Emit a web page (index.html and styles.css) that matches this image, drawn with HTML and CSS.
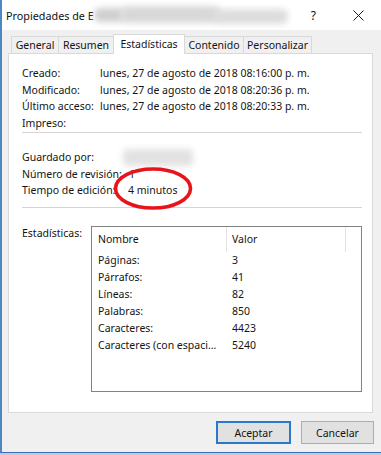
FILE: index.html
```html
<!DOCTYPE html>
<html lang="es">
<head>
<meta charset="utf-8">
<title>Propiedades</title>
<link rel="stylesheet" href="styles.css">
</head>
<body>
<div class="window">
  <div class="titlebar">
    <span class="title">Propiedades de E</span>
    <span class="title-blur"><i class="b1"></i><i class="b2"></i><i class="b3"></i></span>
    <span class="help">?</span>
    <svg class="close" width="11" height="11" viewBox="0 0 11 11"><path d="M0.5 0.5 L10.5 10.5 M10.5 0.5 L0.5 10.5" stroke="#1a1a1a" stroke-width="1" fill="none"/></svg>
  </div>
  <div class="tabs">
    <div class="tab t-general">General</div>
    <div class="tab t-resumen">Resumen</div>
    <div class="tab t-est active">Estadísticas</div>
    <div class="tab t-cont">Contenido</div>
    <div class="tab t-pers">Personalizar</div>
  </div>
  <div class="panel">
    <div class="fields g1">
      <span>Creado:</span><span>lunes, 27 de agosto de 2018 08:16:00 p. m.</span>
      <span>Modificado:</span><span>lunes, 27 de agosto de 2018 08:20:36 p. m.</span>
      <span>Último acceso:</span><span>lunes, 27 de agosto de 2018 08:20:33 p. m.</span>
      <span>Impreso:</span><span></span>
    </div>
    <div class="sep"></div>
    <div class="fields g2">
      <span>Guardado por:</span><span><i class="name-blur"></i></span>
      <span>Número de revisión:</span><span class="rev">1</span>
      <span>Tiempo de edición:</span><span>4 minutos</span>
    </div>
    <div class="sep sep2"></div>
    <div class="stats">
      <span class="stats-label">Estadísticas:</span>
      <div class="listbox">
        <div class="lb-head">
          <span class="h-name">Nombre</span>
          <span class="h-val">Valor</span>
          <span class="h-rest"></span>
        </div>
        <div class="lb-rows">
          <span>Páginas:</span><span>3</span>
          <span>Párrafos:</span><span>41</span>
          <span>Líneas:</span><span>82</span>
          <span>Palabras:</span><span>850</span>
          <span>Caracteres:</span><span>4423</span>
          <span>Caracteres (con espaci...</span><span>5240</span>
        </div>
      </div>
    </div>
  </div>
  <div class="buttons">
    <button class="btn default">Aceptar</button>
    <button class="btn">Cancelar</button>
  </div>
  <svg class="circle" width="86" height="50" viewBox="0 0 86 50"><ellipse cx="43" cy="24.5" rx="37.5" ry="19.5" fill="none" stroke="#e8141c" stroke-width="3.6"/></svg>
</div>
</body>
</html>
```

FILE: styles.css
```css
html, body {
  margin: 0;
  padding: 0;
}
body {
  width: 381px;
  height: 455px;
  overflow: hidden;
  background: #b9cde3;
  font-family: "Noto Sans", "Open Sans", sans-serif;
  font-size: 10.5px;
  color: #141414;
}
.window {
  position: relative;
  box-sizing: border-box;
  width: 381px;
  height: 453px;
  background: #f0f0f0;
  border-left: 2px solid #4f86c6;
  border-bottom: 1px solid #3c6eae;
  display: flex;
  flex-direction: column;
}
.titlebar {
  height: 30px;
  background: #ffffff;
  display: flex;
  align-items: center;
  padding-left: 4px;
  font-size: 10.8px;
  color: #111;
  flex: none;
}
.title {
  white-space: nowrap;
}
.title-blur {
  position: relative;
  width: 196px;
  height: 24px;
  display: block;
  margin-left: 0;
}
.title-blur i {
  position: absolute;
  display: block;
  filter: blur(3px);
  border-radius: 6px;
}
.title-blur .b1 { left: 0; top: 5px; width: 30px; height: 14px; background: #cfcfcf; }
.title-blur .b2 { left: 26px; top: 3px; width: 100px; height: 17px; background: #d8d8d8; }
.title-blur .b3 { left: 120px; top: 6px; width: 74px; height: 15px; background: #dddddd; }
.help {
  margin-left: 21px;
  font-size: 12px;
}
.close {
  margin-left: 37px;
}
.tabs {
  height: 23px;
  display: flex;
  align-items: flex-end;
  padding-left: 9px;
  flex: none;
  position: relative;
  z-index: 2;
}
.tab {
  box-sizing: border-box;
  height: 17px;
  border: 1px solid #d9d9d9;
  border-bottom: none;
  margin-right: -1px;
  background: #f0f0f0;
  display: flex;
  align-items: center;
  justify-content: center;
  white-space: nowrap;
}
.tab.active {
  height: 20px;
  margin-bottom: -1px;
  background: #ffffff;
  padding-bottom: 2px;
  position: relative;
  z-index: 3;
}
.t-general { width: 48px; }
.t-resumen { width: 56px; }
.t-est { width: 72px; }
.t-cont { width: 60px; }
.t-pers { width: 69px; }
.panel {
  box-sizing: border-box;
  margin-left: 6px;
  width: 365px;
  height: 360px;
  background: #ffffff;
  border: 1px solid #d9d9d9;
  padding: 11px 10px 0 13px;
  flex: none;
}
.fields {
  display: grid;
  grid-template-columns: 78px 1fr;
  grid-auto-rows: 16.5px;
  align-items: center;
  white-space: nowrap;
}
.g2 {
  grid-template-columns: 106px 1fr;
  margin-top: 16px;
}
.rev {
  padding-left: 1px;
}
.name-blur {
  display: block;
  width: 70px;
  height: 17px;
  margin-left: -5px;
  background: #e2e2e2;
  filter: blur(3px);
  border-radius: 4px;
}
.sep {
  height: 1px;
  background: #d5d5d5;
  margin-top: 1px;
  width: 340px;
}
.sep2 {
  margin-top: 8px;
}
.stats {
  margin-top: 18px;
  display: flex;
  align-items: flex-start;
}
.stats-label {
  width: 69px;
  margin-top: 0;
  white-space: nowrap;
}
.listbox {
  box-sizing: border-box;
  width: 271px;
  height: 166px;
  border: 1px solid #828282;
  background: #fff;
}
.lb-head {
  display: flex;
  height: 25px;
}
.lb-head span {
  box-sizing: border-box;
  display: flex;
  align-items: center;
  border-right: 1px solid #e3e3e3;
}
.h-name { width: 135px; padding-left: 6px; }
.h-val { width: 119px; padding-left: 5px; }
.h-rest { border-right: none !important; flex: 1; }
.lb-rows {
  display: grid;
  grid-template-columns: 135px 1fr;
  grid-auto-rows: 17px;
  align-items: center;
  white-space: nowrap;
}
.lb-rows span:nth-child(odd) { padding-left: 6px; }
.lb-rows span:nth-child(even) { padding-left: 5px; }
.buttons {
  display: flex;
  justify-content: flex-end;
  gap: 10px;
  padding-right: 7px;
  margin-top: 8px;
}
.btn {
  box-sizing: border-box;
  height: 23px;
  font-family: inherit;
  font-size: 10.5px;
  color: #141414;
  background: #e1e1e1;
  border: 1px solid #adadad;
  padding: 0;
  margin: 0;
  width: 73px;
}
.btn.default {
  width: 75px;
  border: 2px solid #2a78c8;
}
.circle {
  position: absolute;
  left: 108px;
  top: 164px;
}
```
